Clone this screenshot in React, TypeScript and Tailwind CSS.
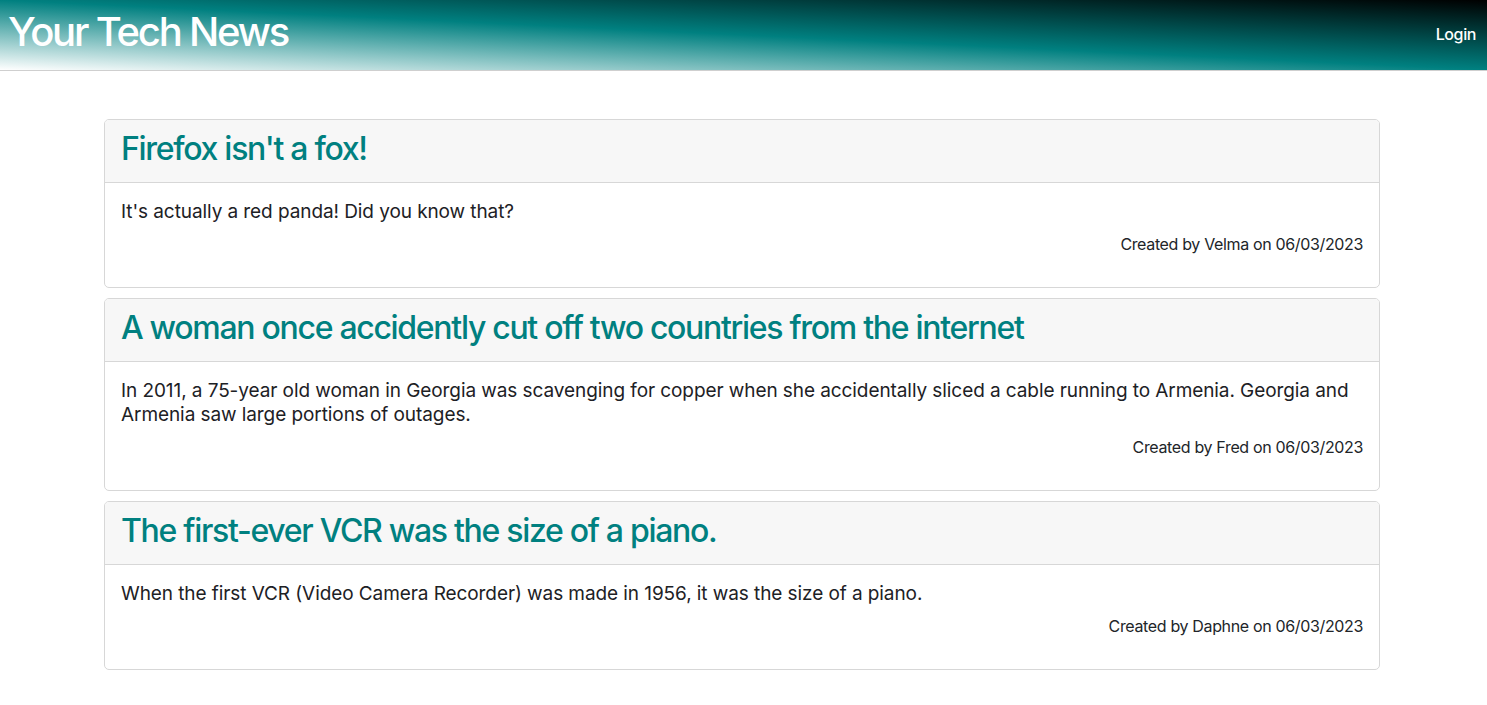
import React from "react";

const posts = [
  {
    title: "Firefox isn't a fox!",
    body: "It's actually a red panda! Did you know that?",
    author: "Velma",
    date: "06/03/2023",
  },
  {
    title: "A woman once accidently cut off two countries from the internet",
    body: "In 2011, a 75-year old woman in Georgia was scavenging for copper when she accidentally sliced a cable running to Armenia. Georgia and Armenia saw large portions of outages.",
    author: "Fred",
    date: "06/03/2023",
  },
  {
    title: "The first-ever VCR was the size of a piano.",
    body: "When the first VCR (Video Camera Recorder) was made in 1956, it was the size of a piano.",
    author: "Daphne",
    date: "06/03/2023",
  },
];

export default function App() {
  return (
    <div className="min-h-screen bg-white text-[#212529] font-['Inter','Noto_Sans',sans-serif]">
      <header className="h-[71px] flex items-start justify-between border-b border-[#cfcfcf] bg-[linear-gradient(to_top_right,#ffffff,#008080_50%,#000000)]">
        <h1 className="pl-2 pt-[8px] text-[40px] leading-[48px] font-medium text-white tracking-[-2.2px]">
          Your Tech News
        </h1>
        <a className="pr-[11px] pt-[22px] text-[16px] leading-[24px] font-medium text-white tracking-[-0.4px]">Login</a>
      </header>
      <main className="w-[1276px] ml-[104px] mt-12 flex flex-col gap-[10px]">
        {posts.map((p) => (
          <div key={p.title} className="border border-[#d7d7d7] rounded-[5px] overflow-hidden">
            <div className="bg-[#f7f7f7] border-b border-[#d7d7d7] px-4 pt-[10px] pb-[14px]">
              <h2 className="text-[32px] leading-[38px] font-medium text-[#008080] tracking-[-1.3px]">
                {p.title}
              </h2>
            </div>
            <div className="px-4 pt-[17px] pb-4">
              <p className="text-[19px] leading-[24px] mb-2 tracking-[-0.08px] text-[#1d2125]">{p.body}</p>
              <p className="text-[16px] leading-[24px] text-right mb-[15px] tracking-[-0.35px]">
                Created by {p.author} on {p.date}
              </p>
            </div>
          </div>
        ))}
      </main>
    </div>
  );
}
